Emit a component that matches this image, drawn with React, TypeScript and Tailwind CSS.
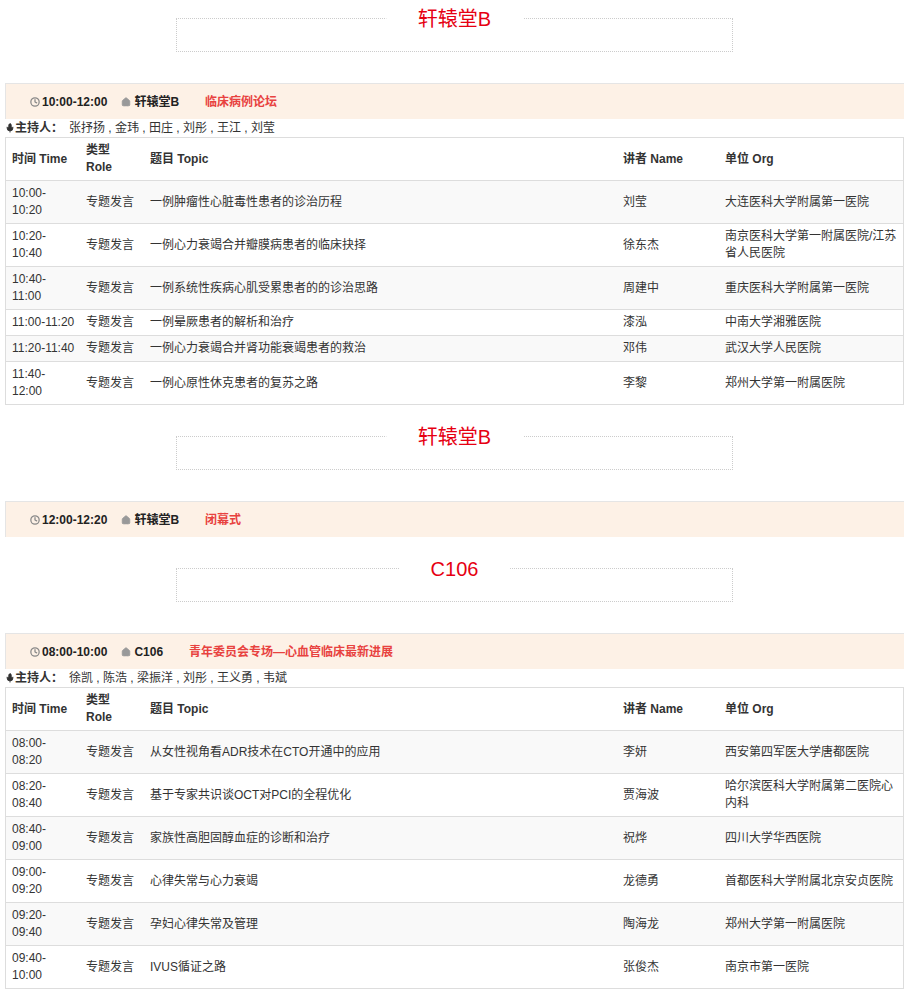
import { Clock, Home, Mic } from 'lucide-react';

type Row = [string, string, string, string];

const s1: Row[] = [
  ['10:00-10:20', '一例肿瘤性心脏毒性患者的诊治历程', '刘莹', '大连医科大学附属第一医院'],
  ['10:20-10:40', '一例心力衰竭合并瓣膜病患者的临床抉择', '徐东杰', '南京医科大学第一附属医院/江苏省人民医院'],
  ['10:40-11:00', '一例系统性疾病心肌受累患者的的诊治思路', '周建中', '重庆医科大学附属第一医院'],
  ['11:00-11:20', '一例晕厥患者的解析和治疗', '漆泓', '中南大学湘雅医院'],
  ['11:20-11:40', '一例心力衰竭合并肾功能衰竭患者的救治', '邓伟', '武汉大学人民医院'],
  ['11:40-12:00', '一例心原性休克患者的复苏之路', '李黎', '郑州大学第一附属医院'],
];

const s2: Row[] = [
  ['08:00-08:20', '从女性视角看ADR技术在CTO开通中的应用', '李妍', '西安第四军医大学唐都医院'],
  ['08:20-08:40', '基于专家共识谈OCT对PCI的全程优化', '贾海波', '哈尔滨医科大学附属第二医院心内科'],
  ['08:40-09:00', '家族性高胆固醇血症的诊断和治疗', '祝烨', '四川大学华西医院'],
  ['09:00-09:20', '心律失常与心力衰竭', '龙德勇', '首都医科大学附属北京安贞医院'],
  ['09:20-09:40', '孕妇心律失常及管理', '陶海龙', '郑州大学第一附属医院'],
  ['09:40-10:00', 'IVUS循证之路', '张俊杰', '南京市第一医院'],
];

function Title({ text }: { text: string }) {
  return (
    <div className="relative mx-auto mt-[31px] mb-[31px] h-[34px] w-[557px] border border-dotted border-[#ccc]">
      <div className="absolute left-1/2 top-[-14px] -translate-x-1/2 bg-white px-8 text-[20px] leading-[28px] text-[#e60012]">
        {text}
      </div>
    </div>
  );
}

function Head({ time, room, name }: { time: string; room: string; name: string }) {
  return (
    <div className="mx-[5px] flex h-[36px] items-center gap-[14px] border-l border-t border-[#e5e5e5] bg-[#fdf1e6] pl-[24px] text-[12px] font-bold text-[#222]">
      <span className="flex items-center gap-[2px]"><Clock size={10} className="text-[#888]" strokeWidth={3} />{time}</span>
      <span className="flex items-center gap-[3px]"><Home size={10} className="fill-[#999] text-[#999]" />{room}</span>
      <span className="ml-[12px] text-[#e8423f]">{name}</span>
    </div>
  );
}

function Table({ hosts, rows }: { hosts: string; rows: Row[] }) {
  return (
    <div className="mx-[5px]">
      <div className="flex h-[18px] items-center text-[12px] text-[#333]">
        <Mic size={10} className="fill-[#333]" /><b className="mr-[6px]">主持人：</b>{hosts}
      </div>
      <div className="border border-[#ddd] text-[12px] leading-[17px] text-[#333]">
        <div className="grid grid-cols-[74px_64px_473px_102px_1fr] items-center border-b border-[#ddd] py-[4px] pl-[6px] font-bold">
          <div>时间 Time</div>
          <div>类型<br />Role</div>
          <div>题目 Topic</div>
          <div>讲者 Name</div>
          <div>单位 Org</div>
        </div>
        {rows.map((r, i) => {
          const [a, b] = r[0].split('-');
          const short = r[0] === '11:00-11:20' || r[0] === '11:20-11:40';
          return (
            <div key={i} className={`grid grid-cols-[74px_64px_473px_102px_1fr] items-center border-b border-[#ddd] py-[4px] pl-[6px] last:border-b-0 ${i % 2 === 0 ? 'bg-[#f9f9f9]' : 'bg-white'}`}>
              <div>{short ? r[0] : <>{a}-<br />{b}</>}</div>
              <div>专题发言</div>
              <div>{r[1]}</div>
              <div>{r[2]}</div>
              <div>{r[3]}</div>
            </div>
          );
        })}
      </div>
    </div>
  );
}

export default function App() {
  return (
    <div className="w-[909px] bg-white pt-[18px]" style={{ fontFamily: '"Liberation Sans", "Noto Sans CJK SC", sans-serif' }}>
      <div className="-mt-[31px]"><Title text="轩辕堂B" /></div>
      <Head time="10:00-12:00" room="轩辕堂B" name="临床病例论坛" />
      <Table hosts="张抒扬 , 金玮 , 田庄 , 刘彤 , 王江 , 刘莹" rows={s1} />
      <Title text="轩辕堂B" />
      <Head time="12:00-12:20" room="轩辕堂B" name="闭幕式" />
      <Title text="C106" />
      <Head time="08:00-10:00" room="C106" name="青年委员会专场—心血管临床最新进展" />
      <Table hosts="徐凯 , 陈浩 , 梁振洋 , 刘彤 , 王义勇 , 韦斌" rows={s2} />
    </div>
  );
}
